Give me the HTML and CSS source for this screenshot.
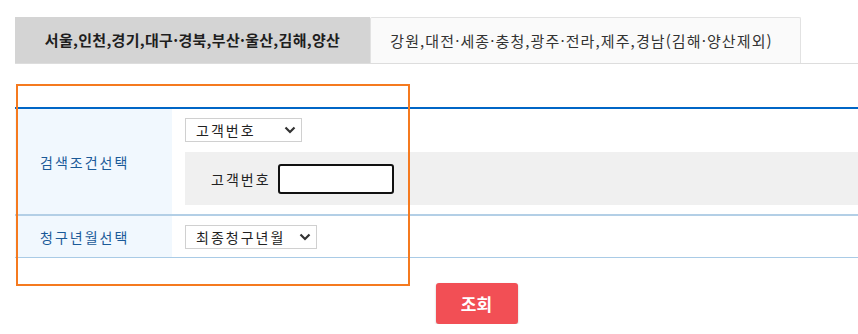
FILE: index.html
```html
<!DOCTYPE html>
<html lang="ko">
  <head>
    <meta charset="utf-8">
    <title>요금 조회</title>
    <link rel="stylesheet" href="styles.css">
  </head>
  <body>
    <div class="wrap">
      <ul class="tabs">
        <li class="tab on">서울,인천,경기,대구·경북,부산·울산,김해,양산</li>
        <li class="tab">강원,대전·세종·충청,광주·전라,제주,경남(김해·양산제외)</li>
      </ul>

      <table class="search">
        <tr class="row1">
          <th>검색조건선택</th>
          <td>
            <div class="sel sel1">
              <select>
                <option>고객번호</option>
              </select>
              <svg class="arrow" width="12" height="8" viewBox="0 0 12 8"><path d="M1.5 1.5 L6 6 L10.5 1.5" fill="none" stroke="#333" stroke-width="2.2"/></svg>
            </div>
            <div class="cond">
              <label for="custNo">고객번호</label>
              <input type="text" id="custNo" class="custNo">
            </div>
          </td>
        </tr>
        <tr class="row2">
          <th>청구년월선택</th>
          <td>
            <div class="sel sel2">
              <select>
                <option>최종청구년월</option>
              </select>
              <svg class="arrow" width="12" height="8" viewBox="0 0 12 8"><path d="M1.5 1.5 L6 6 L10.5 1.5" fill="none" stroke="#333" stroke-width="2.2"/></svg>
            </div>
          </td>
        </tr>
      </table>

      <div class="btns">
        <button class="btnSearch">조회</button>
      </div>

      <div class="mark"></div>
    </div>
  </body>
</html>
```

FILE: styles.css
```css
  html {
    overflow: hidden;
  }

  body {
    margin: 0;
    padding: 17px 0 0 15px;
    font-family: "Noto Sans CJK KR", "Noto Sans", sans-serif;
    color: #222;
    background-color: #fff;
  }

  .wrap {
    width: 923px;
  }

  .tabs {
    display: flex;
    margin: 0;
    padding: 0;
    list-style: none;
    border-bottom: 1px solid #ddd;
  }

  .tab {
    height: 46px;
    line-height: 46px;
    font-size: 15px;
    text-align: center;
    box-sizing: border-box;
  }

  .tab.on {
    width: 355px;
    background-color: #d4d4d4;
    font-weight: bold;
    letter-spacing: 0.3px;
    color: #1e1e1e;
  }

  .tab:not(.on) {
    width: 431px;
    background-color: #fafafa;
    border: 1px solid #e2e2e2;
    border-bottom: 0;
    border-radius: 2px 2px 0 0;
    color: #333;
    letter-spacing: 1.1px;
    padding-right: 8px;
  }

  .search {
    width: 100%;
    margin-top: 43px;
    border-collapse: separate;
    border-spacing: 0;
    border-top: 2px solid #0066c6;
  }

  .search th {
    width: 132px;
    padding: 0 0 0 25px;
    text-align: left;
    font-size: 14px;
    font-weight: normal;
    letter-spacing: 2px;
    color: #1a5a98;
    background-color: #f1f8fe;
  }

  .search td {
    padding: 0 0 0 13px;
  }

  .row1 th,
  .row1 td {
    border-bottom: 2px solid #b3cfe6;
  }

  .row1 th {
    height: 105px;
  }

  .row1 td {
    padding-top: 9px;
    padding-bottom: 9px;
    vertical-align: top;
  }

  .row2 th,
  .row2 td {
    height: 41px;
    border-bottom: 1px solid #a9cbe6;
  }

  .sel {
    position: relative;
    display: inline-block;
    vertical-align: top;
  }

  .sel select {
    display: block;
    -webkit-appearance: none;
    appearance: none;
    height: 24px;
    margin: 0;
    padding: 0 0 0 10px;
    font-family: inherit;
    font-size: 14px;
    letter-spacing: 2px;
    color: #222;
    background-color: #fff;
    border: 1px solid #d0d0d0;
    border-radius: 0;
  }

  .sel1 select {
    width: 117px;
  }

  .sel2 select {
    width: 132px;
  }

  .sel .arrow {
    position: absolute;
    right: 6px;
    top: 8px;
    pointer-events: none;
  }

  .cond {
    display: flex;
    align-items: center;
    height: 53px;
    margin-top: 10px;
    padding-left: 26px;
    background-color: #f0f0f0;
  }

  .cond label {
    font-size: 14px;
    letter-spacing: 2px;
    color: #222;
    margin-right: 7px;
  }

  .custNo {
    width: 116px;
    height: 30px;
    box-sizing: border-box;
    border: 2px solid #111;
    border-radius: 3px;
    background-color: #fff;
  }

  .btns {
    text-align: center;
    padding-top: 25px;
  }

  .btnSearch {
    width: 82px;
    height: 41px;
    font-family: inherit;
    font-size: 17px;
    font-weight: bold;
    color: #fff;
    border: 0;
    border-radius: 3px;
    background-color: #f24f55;
    box-shadow: 0 1px 2px rgba(0, 0, 0, .25);
  }

  .mark {
    position: absolute;
    left: 16px;
    top: 84px;
    width: 390px;
    height: 198px;
    border: 2px solid #f57a1f;
  }
```
